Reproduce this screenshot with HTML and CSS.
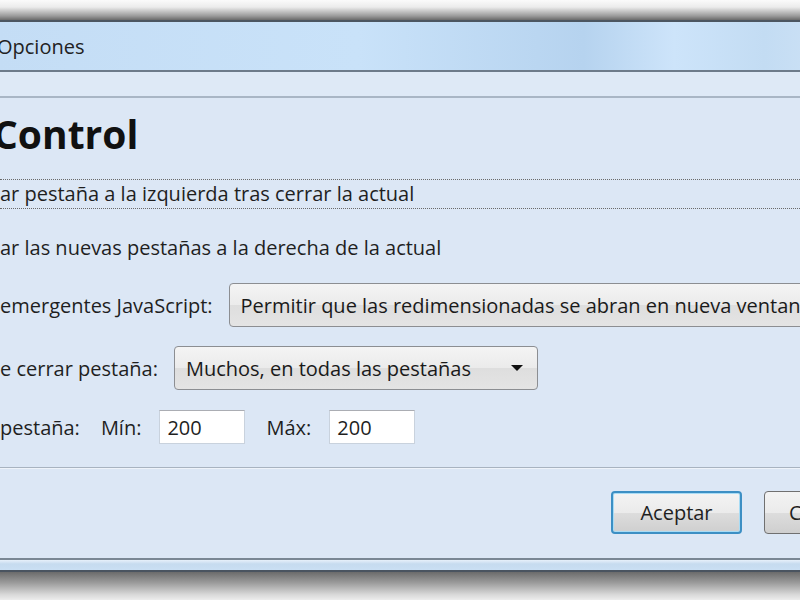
FILE: index.html
```html
<!DOCTYPE html>
<html lang="es">
<head>
    <meta charset="UTF-8">
    <title>Opciones</title>
    <link rel="stylesheet" href="styles.css">
</head>
<body>
    <div class="shadow-top"></div>
    <div class="window">
        <div class="titlebar">Opciones</div>
        <div class="toolbar"></div>

        <div class="content">
            <h1 class="section-title">Control</h1>

            <div class="focus-row">ar pestaña a la izquierda tras cerrar la actual</div>
            <div class="row">ar las nuevas pestañas a la derecha de la actual</div>

            <div class="field-row first-select">
                <span class="label">emergentes JavaScript:</span>
                <div class="dropdown wide">Permitir que las redimensionadas se abran en nueva ventana</div>
            </div>

            <div class="field-row second-select">
                <span class="label">e cerrar pestaña:</span>
                <div class="dropdown">
                    <span>Muchos, en todas las pestañas</span>
                    <span class="arrow"></span>
                </div>
            </div>

            <div class="field-row size-row">
                <span class="label">pestaña:</span>
                <span class="label min-label">Mín:</span>
                <input class="num-input" type="text" value="200">
                <span class="label max-label">Máx:</span>
                <input class="num-input" type="text" value="200">
            </div>

            <div class="separator"></div>

            <div class="button-row">
                <button class="button default-button">Aceptar</button>
                <button class="button">Cancelar</button>
            </div>
        </div>

        <div class="footer"></div>
    </div>
    <div class="shadow-bottom"></div>
</body>
</html>
```

FILE: styles.css
```css
* {
    margin: 0;
    padding: 0;
    box-sizing: border-box;
}

body {
    width: 800px;
    height: 600px;
    overflow: hidden;
    background: #f7f7f7;
    font-family: 'Open Sans', 'Noto Sans', sans-serif;
    font-size: 20px;
    color: #1f1f1f;
}

.shadow-top {
    height: 20px;
    background: linear-gradient(180deg, #fbfbfb 0%, #ececec 35%, #9a9a9a 80%, #6a6a6a 100%);
}

.window {
    width: 900px;
    border-top: 2px solid #4c5661;
}

.titlebar {
    height: 50px;
    line-height: 50px;
    margin-left: -3px;
    font-size: 20px;
    color: #222;
    background: linear-gradient(90deg, #c4ddf5 0%, #c9e2f9 40%, #b6d3ef 65%, #cde4fa 75%, #c3dcf3 85%, #d9e8f8 100%);
    border-bottom: 2px solid #6d7b8a;
}

.toolbar {
    height: 26px;
    background: #dee9f6;
    border-bottom: 2px solid #a9b6c5;
}

.content {
    height: 460px;
    background: #dce7f5;
    overflow: hidden;
}

.section-title {
    margin-left: -7px;
    padding-top: 12px;
    line-height: 48px;
    font-size: 39px;
    font-weight: bold;
    color: #111;
}

.focus-row {
    margin-top: 21px;
    height: 30px;
    line-height: 28px;
    border-top: 1px dotted #6a6a6a;
    border-bottom: 1px dotted #6a6a6a;
}

.row {
    margin-top: 25px;
    line-height: 28px;
}

.field-row {
    display: flex;
    align-items: center;
    gap: 16px;
}

.first-select {
    margin-top: 21px;
}

.second-select {
    margin-top: 19px;
}

.size-row {
    margin-top: 20px;
    gap: 0;
}

.dropdown {
    height: 44px;
    display: flex;
    align-items: center;
    justify-content: space-between;
    padding: 0 14px 0 11px;
    border: 1px solid #8c8e92;
    border-radius: 4px;
    background: linear-gradient(180deg, #f4f4f4 0%, #ebebeb 50%, #dedede 51%, #e4e4e4 100%);
    color: #1a1a1a;
    width: 364px;
    white-space: nowrap;
}

.dropdown.wide {
    width: 640px;
}

.arrow {
    width: 0;
    height: 0;
    border-left: 6px solid transparent;
    border-right: 6px solid transparent;
    border-top: 6px solid #111;
}

.min-label {
    margin-left: 21px;
}

.max-label {
    margin-left: 21px;
}

.num-input {
    width: 86px;
    height: 34px;
    margin-left: 18px;
    padding-left: 7px;
    border: 1px solid #c9d2dd;
    border-top-color: #abadb3;
    background: #fff;
    font-family: inherit;
    font-size: 20px;
    color: #1f1f1f;
    outline: none;
}

.separator {
    margin-top: 23px;
    height: 2px;
    border-top: 1px solid #a8b3c0;
    border-bottom: 1px solid #eef3fa;
}

.button-row {
    display: flex;
    gap: 22px;
    margin-top: 22px;
    padding-left: 611px;
}

.button {
    flex: none;
    width: 131px;
    height: 43px;
    border: 1px solid #707070;
    border-radius: 4px;
    background: linear-gradient(180deg, #f3f3f3 0%, #ebebeb 50%, #dddddd 51%, #cfcfcf 100%);
    font-family: inherit;
    font-size: 20px;
    color: #1f1f1f;
}

.default-button {
    border: 2px solid #3c8fc4;
    box-shadow: inset 0 0 0 1px #a8dcf5;
}

.footer {
    height: 14px;
    border-top: 2px solid #7a8794;
    border-bottom: 2px solid #4a5460;
    background: linear-gradient(180deg, #e7f0fa 0%, #c6dbef 40%, #cadff3 100%);
}

.shadow-bottom {
    height: 30px;
    background: linear-gradient(180deg, #6b6b6b 0%, #9a9a9a 35%, #d8d8d8 75%, #f4f4f4 100%);
}
```
